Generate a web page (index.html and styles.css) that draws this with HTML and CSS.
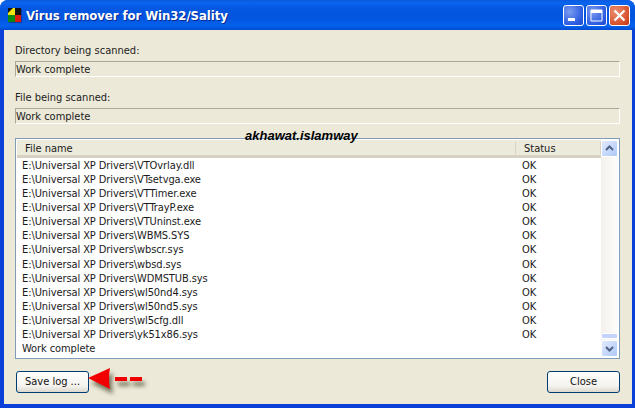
FILE: index.html
```html
<!DOCTYPE html>
<html>
<head>
<meta charset="utf-8">
<title>Virus remover for Win32/Sality</title>
<link rel="stylesheet" href="styles.css">
</head>
<body>
<div class="window">
  <div class="titlebar">
    <svg class="appicon" width="14" height="15" viewBox="0 0 14 15"><rect x="0" y="0" width="7" height="7" fill="#f2e411"/><rect x="7" y="0" width="6" height="7" fill="#101010"/><rect x="0" y="7" width="7" height="7" fill="#0a8a12"/><rect x="7" y="7" width="6" height="7" fill="#d81a10"/><path d="M0 0h5L0 5z" fill="#111"/><rect x="13" y="1" width="1" height="14" fill="#0a3aa8"/><rect x="1" y="14" width="13" height="1" fill="#0a3aa8"/></svg>
    <div class="title">Virus remover for Win32/Sality</div>
    <div class="caps">
      <div class="cap"><svg width="21" height="21" viewBox="0 0 21 21"><rect x="5" y="13" width="7" height="3" fill="#fff"/></svg></div>
      <div class="cap"><svg width="21" height="21" viewBox="0 0 21 21"><path d="M5 5h11v11H5z" fill="none" stroke="#fff"/><rect x="5" y="5" width="11" height="3" fill="#fff"/></svg></div>
      <div class="cap close"><svg width="21" height="21" viewBox="0 0 21 21"><path d="M5.5 5.5l10 10M15.5 5.5l-10 10" stroke="#fff" stroke-width="2.2"/></svg></div>
    </div>
  </div>
  <div class="client">
    <div class="label">Directory being scanned:</div>
    <div class="field">Work complete</div>
    <div class="label second">File being scanned:</div>
    <div class="field">Work complete</div>
    <div class="list">
      <div class="listmain">
        <div class="head">
          <div class="hname">File name</div>
          <div class="hstatus">Status</div>
        </div>
        <div class="rows">
          <div class="row"><span class="cname">E:\Universal XP Drivers\VTOvrlay.dll</span><span>OK</span></div>
          <div class="row"><span class="cname">E:\Universal XP Drivers\VTsetvga.exe</span><span>OK</span></div>
          <div class="row"><span class="cname">E:\Universal XP Drivers\VTTimer.exe</span><span>OK</span></div>
          <div class="row"><span class="cname">E:\Universal XP Drivers\VTTrayP.exe</span><span>OK</span></div>
          <div class="row"><span class="cname">E:\Universal XP Drivers\VTUninst.exe</span><span>OK</span></div>
          <div class="row"><span class="cname">E:\Universal XP Drivers\WBMS.SYS</span><span>OK</span></div>
          <div class="row"><span class="cname">E:\Universal XP Drivers\wbscr.sys</span><span>OK</span></div>
          <div class="row"><span class="cname">E:\Universal XP Drivers\wbsd.sys</span><span>OK</span></div>
          <div class="row"><span class="cname">E:\Universal XP Drivers\WDMSTUB.sys</span><span>OK</span></div>
          <div class="row"><span class="cname">E:\Universal XP Drivers\wl50nd4.sys</span><span>OK</span></div>
          <div class="row"><span class="cname">E:\Universal XP Drivers\wl50nd5.sys</span><span>OK</span></div>
          <div class="row"><span class="cname">E:\Universal XP Drivers\wl5cfg.dll</span><span>OK</span></div>
          <div class="row"><span class="cname">E:\Universal XP Drivers\yk51x86.sys</span><span>OK</span></div>
          <div class="row"><span class="cname">Work complete</span></div>
        </div>
      </div>
      <div class="scrollbar">
        <div class="sbtn"><svg width="15" height="15" viewBox="0 0 15 15"><path d="M4 9l3.5-3.5L11 9" fill="none" stroke="#4d6185" stroke-width="2"/></svg></div>
        <div class="strack"></div>
        <div class="sthumb"></div>
        <div class="sbtn"><svg width="15" height="15" viewBox="0 0 15 15"><path d="M4 6l3.5 3.5L11 6" fill="none" stroke="#4d6185" stroke-width="2"/></svg></div>
      </div>
    </div>
    <div class="actions">
      <div class="btn">Save log ...</div>
      <div class="btn">Close</div>
    </div>
    <svg class="arrow" width="62" height="34" viewBox="0 0 62 34">
      <g fill="#f20000"><path d="M0 10L22 0Q20 10 22 21z"/><rect x="27" y="9" width="12" height="4"/><rect x="42" y="9" width="12" height="4"/></g>
    </svg>
  </div>
  <div class="mark">akhawat.islamway</div>
</div>
</body>
</html>
```
FILE: styles.css
```css
* { box-sizing: border-box; }
html, body { margin: 0; padding: 0; }
body {
  width: 635px; height: 408px; overflow: hidden;
  font-family: "DejaVu Sans Condensed", "DejaVu Sans", sans-serif; font-size: 11px; color: #1a1a1a;
}
.window {
  position: relative; width: 635px; height: 408px; display: flex; flex-direction: column;
  background: #0a3fd8; border-radius: 8px 8px 0 0; overflow: hidden;
}
.titlebar {
  height: 30px; flex: none; display: flex; align-items: center; padding: 0 5px 0 8px;
  background: linear-gradient(#0a5ae0 0, #0a64ee 3px, #0458e2 8px, #0354de 18px, #0462ee 26px, #0349d0 30px);
}
.appicon { flex: none; margin-right: 4px; margin-top: 1px; }
.title {
  flex: 1; color: #fff; font-family: "DejaVu Sans Condensed", "DejaVu Sans", sans-serif; font-weight: bold; font-size: 13px;
  text-shadow: 1px 1px 0 #0a2a90; letter-spacing: -0.06px;
}
.caps { display: flex; gap: 2px; margin-top: 1px; }
.cap {
  width: 21px; height: 21px; border: 1px solid #fff; border-radius: 3px; position: relative;
  background: radial-gradient(circle at 30% 30%, #7b9cf0, #2a5ae0 70%, #2248c8);
}
.cap svg { position: absolute; left: -1px; top: -1px; }
.cap.close { background: radial-gradient(circle at 30% 30%, #eb8f70, #d8502a 70%, #b83010); }
.client {
  position: relative; flex: 1; margin: 0 3px 4px 4px; background: #ece9d8; padding: 13px 12px 0 11px; display: flex; flex-direction: column;
}
.label { height: 13px; line-height: 15px; color: #222; }
.second { margin-top: 13px; }
.field {
  height: 16px; margin-top: 5px; line-height: 16px; padding-left: 0;
  border-style: solid; border-width: 1px; border-color: #aca899 #fff #fff #aca899;
}
.list {
  margin-top: 14px; height: 221px; display: flex; background: #fff; border: 1px solid #7f9db9; padding: 1px;
}
.listmain { flex: 1; min-width: 0; display: flex; flex-direction: column; }
.head {
  height: 18px; display: flex; background: #ebeadb; border-bottom: 3px solid #d6d2c2; line-height: 18px;
}
.hname { width: 499px; padding-left: 8px; background: linear-gradient(#d6d2c2,#d6d2c2) right 2px / 1px 12px no-repeat; }
.hstatus { flex: 1; padding-left: 8px; background: linear-gradient(#d6d2c2,#d6d2c2) right 2px / 1px 12px no-repeat; }
.rows { padding-top: 1px; }
.row { height: 14.08px; line-height: 14px; display: flex; padding-left: 5px; white-space: nowrap; letter-spacing: -0.09px; }
.cname { width: 500px; }
.scrollbar { width: 17px; flex: none; display: flex; flex-direction: column; background: linear-gradient(90deg,#f3f1ec,#fdfdfb); }
.sbtn {
  height: 17px; width: 17px; flex: none; border: 1px solid #fff; border-radius: 2px; background: linear-gradient(135deg,#e1eafe,#aec8f7); display: flex; align-items: center; justify-content: center;
}
.strack { flex: 1; }
.sthumb { height: 6px; margin-bottom: 1px; border: 1px solid #fff; border-radius: 2px; background: #c3d3fb; flex: none; }
.actions { display: flex; justify-content: space-between; margin-top: 12px; padding-left: 1px; }
.btn {
  width: 73px; height: 22px; line-height: 20px; text-align: center; border: 1px solid #003c74; border-radius: 3px;
  background: linear-gradient(#fff, #f4f3ee 70%, #dcd8ce); color: #111;
}
.arrow { position: absolute; left: 84px; top: 338px; filter: drop-shadow(3px 5px 2px rgba(70,70,40,.7)); }
.mark {
  position: absolute; left: 245px; top: 128px; font: italic bold 13px "Liberation Sans", Arial, sans-serif; color: #000;
}
```
